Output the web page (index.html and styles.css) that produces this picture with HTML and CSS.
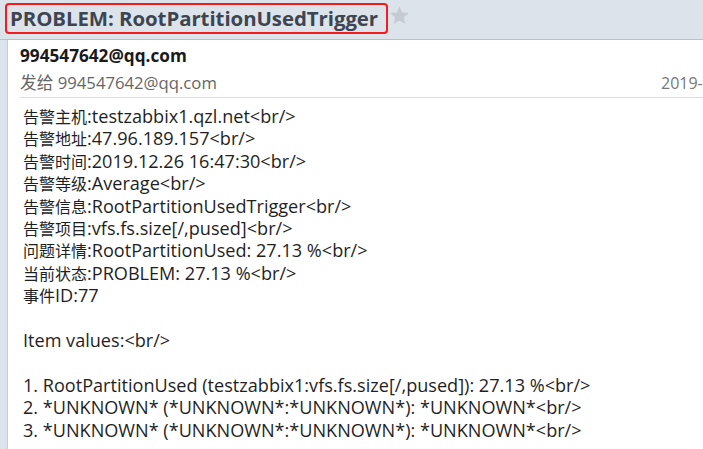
FILE: index.html
```html
<!DOCTYPE html>
<html>
<head>
<meta charset="utf-8">
<link rel="stylesheet" href="styles.css">
</head>
<body>
<div class="page">
  <header class="subject-bar">
    <h1 class="subject">PROBLEM: RootPartitionUsedTrigger</h1>
    <svg class="star" width="21" height="21" viewBox="0 0 24 24"><path d="M12 1.5l3 7.1 7.6.6-5.8 5 1.8 7.4L12 17.6l-6.6 4 1.8-7.4-5.8-5 7.6-.6z" fill="#c6cbd1"/></svg>
  </header>
  <section class="card">
    <div class="meta">
      <div class="from">994547642@qq.com</div>
      <div class="to-row">
        <span class="to">发给 994547642@qq.com</span>
        <span class="date">2019-12-26 16:47</span>
      </div>
    </div>
    <div class="body">
      <p><span class="zh">告警主机</span>:testzabbix1.qzl.net&lt;br/&gt;</p>
      <p><span class="zh">告警地址</span>:47.96.189.157&lt;br/&gt;</p>
      <p><span class="zh">告警时间</span>:2019.12.26 16:47:30&lt;br/&gt;</p>
      <p><span class="zh">告警等级</span>:Average&lt;br/&gt;</p>
      <p><span class="zh">告警信息</span>:RootPartitionUsedTrigger&lt;br/&gt;</p>
      <p><span class="zh">告警项目</span>:vfs.fs.size[/,pused]&lt;br/&gt;</p>
      <p><span class="zh">问题详情</span>:RootPartitionUsed: 27.13 %&lt;br/&gt;</p>
      <p><span class="zh">当前状态</span>:PROBLEM: 27.13 %&lt;br/&gt;</p>
      <p><span class="zh">事件</span>ID:77</p>
      <p class="blank">&nbsp;</p>
      <p>Item values:&lt;br/&gt;</p>
      <p class="blank">&nbsp;</p>
      <p>1. RootPartitionUsed (testzabbix1:vfs.fs.size[/,pused]): 27.13 %&lt;br/&gt;</p>
      <p>2. *UNKNOWN* (*UNKNOWN*:*UNKNOWN*): *UNKNOWN*&lt;br/&gt;</p>
      <p>3. *UNKNOWN* (*UNKNOWN*:*UNKNOWN*): *UNKNOWN*&lt;br/&gt;</p>
    </div>
  </section>
</div>
</body>
</html>
```
FILE: styles.css
```css
html, body {
  margin: 0;
  padding: 0;
  background: #dde3ea;
  overflow: hidden;
}
.page {
  width: 703px;
  height: 449px;
  display: flex;
  flex-direction: column;
}
.subject-bar {
  height: 40px;
  flex: none;
  display: flex;
  align-items: flex-start;
  padding: 3px 0 0 5px;
  box-sizing: border-box;
  border-bottom: 1px solid #b9c0c8;
}
.subject {
  margin: 0;
  font-family: "Open Sans", sans-serif;
  font-weight: 700;
  font-size: 20.4px;
  line-height: 27px;
  letter-spacing: -0.05px;
  color: #3d4550;
  border: 2px solid #f21c1c;
  border-radius: 4px;
  padding: 0 8px 0 3px;
  white-space: nowrap;
}
.star {
  margin: 2px 0 0 1px;
}
.card {
  flex: 1;
  margin-left: 7px;
  background: #fff;
  border-left: 1px solid #c7ccd2;
  padding-left: 12px;
  overflow: hidden;
}
.meta {
  border-bottom: 1px solid #dcdcdc;
  padding-top: 5px;
  height: 52px;
}
.from {
  font-family: "Open Sans", sans-serif;
  font-weight: 700;
  font-size: 17.2px;
  line-height: 22px;
  color: #1a1a1a;
}
.to-row {
  display: flex;
  margin-top: 5px;
  font-family: "Open Sans", "Noto Sans CJK SC", sans-serif;
  font-size: 16.7px;
  line-height: 22px;
  color: #666;
  white-space: nowrap;
}
.date {
  margin-left: auto;
  width: 40px;
  position: relative;
  left: -2px;
  font-size: 16px;
  color: #777;
}
.body {
  padding: 7px 0 0 3px;
  font-family: "Open Sans", "Noto Sans CJK SC", sans-serif;
  font-size: 18.1px;
  line-height: 22.4px;
  color: #1f1f1f;
}
.body p {
  margin: 0;
  white-space: nowrap;
}
.zh {
  font-family: "Noto Sans CJK SC", sans-serif;
  font-size: 16px;
}
```
